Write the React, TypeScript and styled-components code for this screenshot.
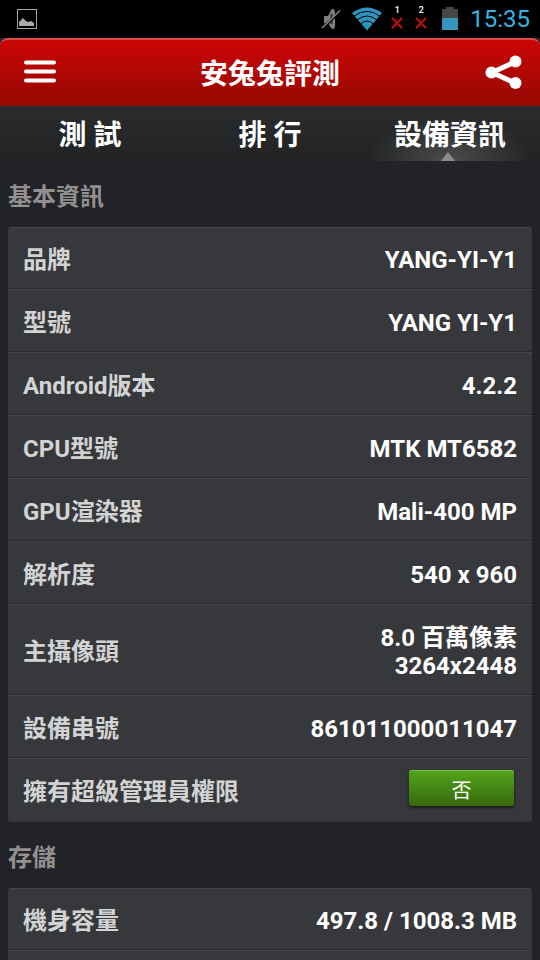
import React from "react";
import styled, { createGlobalStyle } from "styled-components";

const GlobalStyle = createGlobalStyle`
  *, *::before, *::after { box-sizing: border-box; }
  body {
    margin: 0;
    background: #222328;
    color: #fff;
    font-family: Roboto, "Noto Sans CJK TC", sans-serif;
  }
  button { font: inherit; color: inherit; border: 0; padding: 0; cursor: pointer; }
`;

const Screen = styled.div`
  display: flex;
  flex-direction: column;
  height: 100vh;
  overflow: hidden;
`;

const StatusBar = styled.div`
  display: flex;
  flex: none;
  align-items: center;
  justify-content: space-between;
  height: 38px;
  padding: 0 10px 0 17px;
  background: #000;
`;

const StatusIcons = styled.div`
  display: flex;
  align-items: center;
`;

const StatusIcon = styled.svg<{ $gap?: number }>`
  display: block;
  margin-right: ${({ $gap }) => $gap ?? 0}px;
`;

const Signal = styled.div`
  display: flex;
  flex-direction: column;
  align-items: center;
  gap: 2px;
  width: 24px;
  padding-bottom: 4px;
  font-size: 9px;
  line-height: 9px;
  font-weight: 500;
`;

const Clock = styled.time`
  color: #33b5e5;
  font-size: 24px;
  line-height: 38px;
`;

const HeaderBack = styled.div`
  flex: none;
  background: #25262a;
`;

const Header = styled.header`
  display: grid;
  grid-template-columns: 80px 1fr 80px;
  align-items: center;
  height: 68px;
  border-top: 2px solid #dc4a4a;
  border-bottom: 2px solid #940a04;
  border-radius: 8px 8px 0 0;
  background: linear-gradient(#cb0606, #960902);
`;

const Title = styled.h1`
  margin: 0;
  padding-top: 6px;
  text-align: center;
  font-size: 28px;
  line-height: 40px;
  font-weight: 700;
`;

const IconButton = styled.button<{ $end?: boolean }>`
  display: flex;
  justify-content: ${({ $end }) => ($end ? "flex-end" : "flex-start")};
  align-items: center;
  height: 64px;
  padding: 0 ${({ $end }) => ($end ? 18 : 24)}px;
  background: none;
`;

const Tabs = styled.nav`
  display: grid;
  flex: none;
  grid-template-columns: repeat(3, 1fr);
  height: 55px;
  background: linear-gradient(#2a2b2c, #222324);
`;

const Tab = styled.button<{ $active?: boolean }>`
  position: relative;
  padding-top: 4px;
  font-size: 28px;
  line-height: 51px;
  font-weight: 700;
  background: ${({ $active }) =>
    $active
      ? "radial-gradient(ellipse 84px 46px at 50% 100%, #4c4c4c, #4c4c4c00)"
      : "none"};

  &::after {
    content: "";
    display: ${({ $active }) => ($active ? "block" : "none")};
    position: absolute;
    bottom: 0;
    left: calc(50% - 9px);
    border: 7px solid transparent;
    border-top: 0;
    border-bottom: 9px solid #8b8b8b;
  }
`;

const Content = styled.main`
  flex: 1;
  min-height: 0;
  overflow: hidden;
  padding: 0 8px;
`;

const SectionTitle = styled.h2`
  margin: 0;
  padding: 18px 0 12px;
  color: #92918f;
  font-size: 24px;
  line-height: 36px;
  font-weight: 700;
`;

const Card = styled.dl`
  margin: 0;
  border-radius: 3px;
  background: #37383b;
  overflow: hidden;
`;

const Row = styled.div`
  display: flex;
  align-items: center;
  justify-content: space-between;
  min-height: 63px;
  padding: 19px 15px 14px;
  border-top: 1px solid #444548;
  border-bottom: 1px solid #292a2d;
  font-size: 24px;
  line-height: 28px;
  font-weight: 700;

  &:first-child { min-height: 62px; padding-top: 18px; }
  &:last-child { padding-bottom: 15px; border-bottom-color: transparent; }
`;

const Label = styled.dt`
  color: #d3d3d3;
`;

const Value = styled.dd`
  margin: 0;
  text-align: right;
  white-space: pre-line;
`;

const AnswerButton = styled.button`
  display: block;
  width: 105px;
  height: 36px;
  margin: -8px 3px 0 0;
  padding-top: 6px;
  border-radius: 3px;
  background: linear-gradient(#51a51b, #376810);
  box-shadow: inset 0 1px #75bd48, 0 2px 3px #1c1c1e;
  font-size: 20px;
  line-height: 30px;
  font-weight: 400;
`;

type Entry = { label: string; value: string; button?: boolean };

const basics: Entry[] = [
  { label: "品牌", value: "YANG-YI-Y1" },
  { label: "型號", value: "YANG YI-Y1" },
  { label: "Android版本", value: "4.2.2" },
  { label: "CPU型號", value: "MTK MT6582" },
  { label: "GPU渲染器", value: "Mali-400 MP" },
  { label: "解析度", value: "540 x 960" },
  { label: "主攝像頭", value: "8.0 百萬像素\n3264x2448" },
  { label: "設備串號", value: "861011000011047" },
  { label: "擁有超級管理員權限", value: "否", button: true },
];

const storage: Entry[] = [{ label: "機身容量", value: "497.8 / 1008.3 MB" }];

function Entries({ items }: { items: Entry[] }) {
  return (
    <>
      {items.map(({ label, value, button }) => (
        <Row key={label}>
          <Label>{label}</Label>
          <Value>
            {button ? <AnswerButton type="button">{value}</AnswerButton> : value}
          </Value>
        </Row>
      ))}
    </>
  );
}

function NoSignal({ slot }: { slot: number }) {
  return (
    <Signal>
      <span>{slot}</span>
      <svg width="12" height="12" viewBox="0 0 12 12" aria-hidden="true">
        <path d="M1 1L11 11M11 1L1 11" stroke="#b50f0f" strokeWidth="2.4" />
      </svg>
    </Signal>
  );
}

export default function App() {
  return (
    <>
      <GlobalStyle />
      <Screen>
        <StatusBar>
          <StatusIcon width="20" height="20" viewBox="0 0 20 20" aria-hidden="true">
            <rect x="0.5" y="0.5" width="19" height="19" fill="none" stroke="#a6a6a6" />
            <path d="M2 17V13L4 11L6 9L9 12L11 13L14 12L17 14V17Z" fill="#a9a9a9" />
          </StatusIcon>
          <StatusIcons>
            <StatusIcon $gap={11} width="20" height="22" viewBox="0 0 20 22" aria-hidden="true">
              <path d="M3 8H7L10 2Q14 -1 14 5V17Q14 23 10 20L7 15H3Z" fill="#7d7d7d" />
              <path d="M10.5 6V16" stroke="#333" strokeWidth="2" />
              <path d="M1 20.5L19 3.5" stroke="#000" strokeWidth="2.8" />
              <path d="M1 20L19 2.5" stroke="#8a8a8a" strokeWidth="1.5" />
            </StatusIcon>
            <StatusIcon $gap={3} width="30" height="24" viewBox="0 0 30 24" aria-hidden="true">
              <path d="M0 6Q15 -5 30 6L15 23.5Z" fill="#2e94bf" />
              <path
                d="M2 9.2Q15 -0.5 28 9.2M5 13Q15 5 25 13M8.5 17Q15 11 21.5 17"
                fill="none"
                stroke="#000"
                strokeWidth="1"
              />
            </StatusIcon>
            <NoSignal slot={1} />
            <NoSignal slot={2} />
            <StatusIcon $gap={11} width="26" height="24" viewBox="0 0 26 24" aria-hidden="true">
              <path d="M13 2V0H21V2H25V11H9V2Z" fill="#464646" />
              <path d="M9 11H25V23H9Z" fill="#3595bd" />
            </StatusIcon>
            <Clock>15:35</Clock>
          </StatusIcons>
        </StatusBar>
        <HeaderBack>
          <Header>
            <IconButton type="button" aria-label="選單">
              <svg width="32" height="24" viewBox="0 0 32 24" aria-hidden="true">
                <path
                  d="M2 2.5H30M2 11.5H30M2 20.5H30"
                  stroke="#fff"
                  strokeWidth="4"
                  strokeLinecap="round"
                />
              </svg>
            </IconButton>
            <Title>安兔兔評測</Title>
            <IconButton type="button" aria-label="分享" $end>
              <svg width="37" height="34" viewBox="0 0 37 34" aria-hidden="true">
                <path d="M30 7L7 17.5L30 28" fill="none" stroke="#fff" strokeWidth="5" />
                <circle cx="30.5" cy="6.5" r="6" fill="#fff" />
                <circle cx="6.5" cy="17.5" r="6" fill="#fff" />
                <circle cx="30.5" cy="28" r="6" fill="#fff" />
              </svg>
            </IconButton>
          </Header>
        </HeaderBack>
        <Tabs>
          <Tab type="button">測 試</Tab>
          <Tab type="button">排 行</Tab>
          <Tab type="button" $active aria-current="page">設備資訊</Tab>
        </Tabs>
        <Content>
          <SectionTitle>基本資訊</SectionTitle>
          <Card>
            <Entries items={basics} />
          </Card>
          <SectionTitle>存儲</SectionTitle>
          <Card>
            <Entries items={storage} />
            <Row />
          </Card>
        </Content>
      </Screen>
    </>
  );
}
